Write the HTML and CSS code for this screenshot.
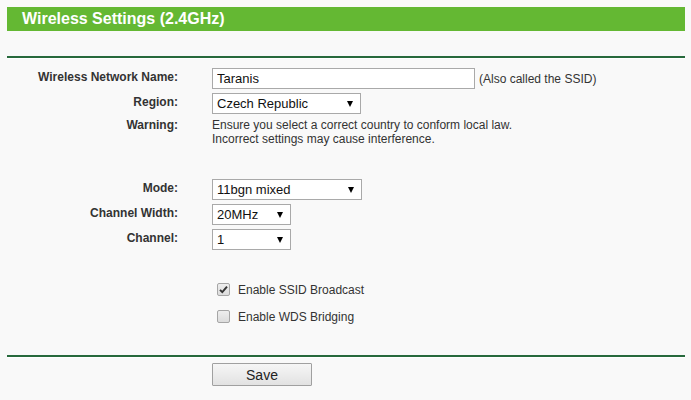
FILE: index.html
```html
<!DOCTYPE html>
<html>
<head>
<meta charset="utf-8">
<link rel="stylesheet" href="styles.css">
</head>
<body>
<div class="page">
  <div class="title">Wireless Settings (2.4GHz)</div>
  <div class="rule rule-top"></div>

  <div class="form">
    <div class="row">
      <div class="label">Wireless Network Name:</div>
      <div class="field">
        <input class="text" type="text" value="Taranis">
        <span class="hint">(Also called the SSID)</span>
      </div>
    </div>
    <div class="row">
      <div class="label">Region:</div>
      <div class="field">
        <div class="select w-region"><span>Czech Republic</span><i class="arrow"></i></div>
      </div>
    </div>
    <div class="row row-warn">
      <div class="label">Warning:</div>
      <div class="field warn">Ensure you select a correct country to conform local law.<br>Incorrect settings may cause interference.</div>
    </div>

    <div class="row row-mode">
      <div class="label">Mode:</div>
      <div class="field">
        <div class="select w-mode"><span>11bgn mixed</span><i class="arrow"></i></div>
      </div>
    </div>
    <div class="row">
      <div class="label">Channel Width:</div>
      <div class="field">
        <div class="select w-small"><span>20MHz</span><i class="arrow"></i></div>
      </div>
    </div>
    <div class="row">
      <div class="label">Channel:</div>
      <div class="field">
        <div class="select w-small"><span>1</span><i class="arrow"></i></div>
      </div>
    </div>
  </div>

  <div class="checks">
    <label class="check">
      <span class="box"><svg width="11" height="11" viewBox="0 0 11 11"><path d="M2 5.8 L4.3 8.2 L9 2.6" fill="none" stroke="#333" stroke-width="1.9"/></svg></span>
      <span>Enable SSID Broadcast</span>
    </label>
    <label class="check">
      <span class="box"></span>
      <span>Enable WDS Bridging</span>
    </label>
  </div>

  <div class="rule rule-bottom"></div>
  <div class="actions">
    <button class="btn" type="button">Save</button>
  </div>
</div>
</body>
</html>
```

FILE: styles.css
```css
html, body {
  margin: 0;
  padding: 0;
  background: #f9f9f9;
}
body {
  font-family: "Liberation Sans", Arial, sans-serif;
  font-size: 12px;
  color: #222;
}
.page {
  width: 678px;
  margin-left: 7px;
  padding-top: 7px;
}
.title {
  height: 24px;
  line-height: 24px;
  background: #64b833;
  color: #fff;
  font-weight: bold;
  font-size: 16px;
  padding-left: 15px;
}
.rule {
  border-top: 2px solid #27693c;
  border-bottom: 1px solid #fff;
}
.rule-top {
  margin-top: 25px;
}
.form {
  margin-top: 7px;
}
.row {
  display: grid;
  grid-template-columns: 171px 1fr;
  column-gap: 34px;
  height: 25px;
}
.label {
  text-align: right;
  font-weight: bold;
  color: #333;
  line-height: 23px;
}
.field {
  display: flex;
  align-items: center;
  height: 23px;
  margin-top: 1px;
  align-self: start;
}
.text {
  box-sizing: border-box;
  width: 263px;
  height: 21px;
  border: 1px solid #a9a9a9;
  background: #fff;
  padding: 0 4px;
  margin: 0;
  font-family: inherit;
  font-size: 13px;
  color: #111;
  outline: none;
}
.hint {
  margin-left: 4px;
  color: #333;
}
.select {
  box-sizing: border-box;
  height: 21px;
  border: 1px solid #a9a9a9;
  background: #fff;
  display: flex;
  align-items: center;
  justify-content: space-between;
  padding: 0 7px 0 4px;
  font-size: 13px;
  color: #111;
}
.w-region { width: 149px; }
.w-mode { width: 150px; }
.w-small { width: 79px; }
.arrow {
  width: 0;
  height: 0;
  border-left: 3px solid transparent;
  border-right: 3px solid transparent;
  border-top: 6px solid #000;
}
.row-warn {
  height: 30px;
}
.row-warn .label,
.row-warn .field {
  line-height: 14px;
  padding-top: 2px;
  margin-top: 0;
}
.warn {
  display: block;
  height: auto;
  color: #333;
}
.row-mode {
  margin-top: 31px;
}
.checks {
  margin-top: 24px;
  padding-left: 210px;
}
.check {
  display: flex;
  align-items: center;
  height: 27px;
  color: #333;
}
.box {
  box-sizing: border-box;
  width: 13px;
  height: 13px;
  border: 1px solid #a6a6a6;
  border-radius: 2px;
  background: linear-gradient(#eeeeee, #dcdcdc);
  margin-right: 8px;
  display: flex;
  align-items: center;
  justify-content: center;
}
.box svg {
  display: block;
}
.rule-bottom {
  margin-top: 25px;
}
.actions {
  padding-left: 205px;
  padding-top: 5px;
}
.btn {
  box-sizing: border-box;
  width: 100px;
  height: 23px;
  border: 1px solid #a0a0a0;
  border-radius: 1px;
  background: linear-gradient(#f6f6f6, #e2e2e2);
  font-family: inherit;
  font-size: 14px;
  color: #222;
  padding: 0;
  margin: 0;
}
```
